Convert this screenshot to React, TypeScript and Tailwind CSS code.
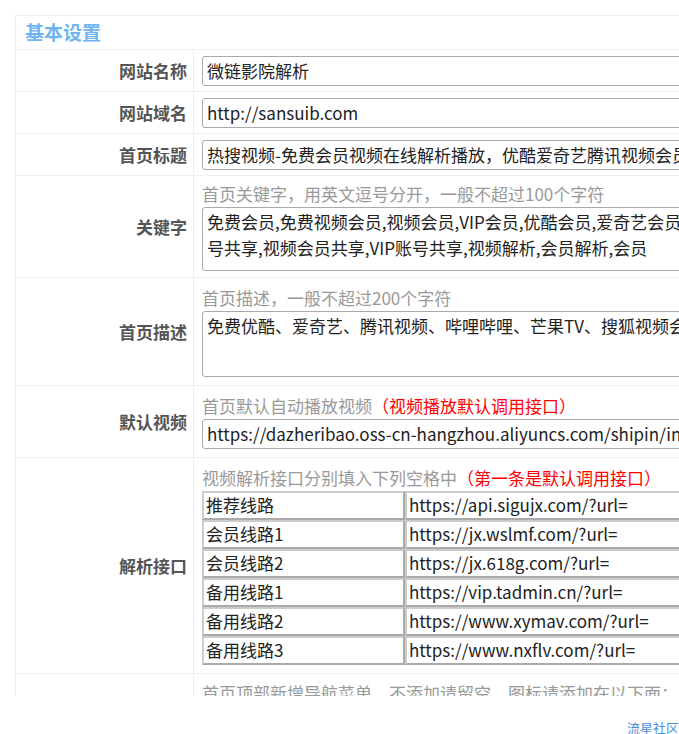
const font = { fontFamily: '"Microsoft YaHei","Noto Sans CJK SC",sans-serif' };

const Row = ({ label, children, h, top }: { label: string; children: React.ReactNode; h: string; top?: boolean }) => (
  <div className={`flex border-t border-[#eeeeee] ${h}`}>
    <div className="w-[178px] shrink-0 flex items-center justify-end pr-[6px] font-bold text-[17px] text-[#555] border-r border-[#eeeeee]">
      {label}
    </div>
    <div className={`flex-1 flex flex-col pl-[8px] gap-[2px] ${top ? "justify-start pt-[8px]" : "justify-center"}`}>{children}</div>
  </div>
);

const Input = ({ value }: { value: string }) => (
  <div className="h-[30px] w-[600px] border border-[#aaa] rounded-[3px] px-[4px] flex items-center text-[17px] text-[#222] whitespace-nowrap overflow-hidden">
    {value}
  </div>
);

const Hint = ({ children }: { children: React.ReactNode }) => (
  <div className="text-[17px] text-[#999] whitespace-nowrap leading-[22px]">{children}</div>
);

const lines = [
  ["推荐线路", "https://api.sigujx.com/?url="],
  ["会员线路1", "https://jx.wslmf.com/?url="],
  ["会员线路2", "https://jx.618g.com/?url="],
  ["备用线路1", "https://vip.tadmin.cn/?url="],
  ["备用线路2", "https://www.xymav.com/?url="],
  ["备用线路3", "https://www.nxflv.com/?url="],
];

export default function App() {
  return (
    <div className="w-[679px] h-[734px] overflow-hidden bg-white relative" style={font}>
      <div className="pt-[15px] pl-[15px] h-[696px] overflow-hidden">
        <div className="w-[700px] border-l border-t border-[#eeeeee]">
          <div className="h-[33px] flex items-center pl-[9px] text-[19px] font-bold text-[#6fb3f0]">基本设置</div>
          <Row label="网站名称" h="h-[42px]"><Input value="微链影院解析" /></Row>
          <Row label="网站域名" h="h-[42px]"><Input value="http://sansuib.com" /></Row>
          <Row label="首页标题" h="h-[42px]"><Input value="热搜视频-免费会员视频在线解析播放，优酷爱奇艺腾讯视频会员" /></Row>
          <Row label="关键字" h="h-[102px]">
            <Hint>首页关键字，用英文逗号分开，一般不超过100个字符</Hint>
            <div className="h-[64px] w-[600px] border border-[#aaa] rounded-[3px] px-[4px] py-[1px] text-[17px] leading-[26px] text-[#222] overflow-hidden whitespace-nowrap">
              免费会员,免费视频会员,视频会员,VIP会员,优酷会员,爱奇艺会员,账
              <br />
              号共享,视频会员共享,VIP账号共享,视频解析,会员解析,会员
            </div>
          </Row>
          <Row label="首页描述" h="h-[108px]">
            <Hint>首页描述，一般不超过200个字符</Hint>
            <div className="h-[66px] w-[600px] border border-[#aaa] rounded-[3px] px-[4px] py-[1px] text-[17px] leading-[26px] text-[#222] overflow-hidden whitespace-nowrap">
              免费优酷、爱奇艺、腾讯视频、哔哩哔哩、芒果TV、搜狐视频会员
            </div>
          </Row>
          <Row label="默认视频" h="h-[72px]">
            <Hint>首页默认自动播放视频<span className="text-[#f00]">（视频播放默认调用接口）</span></Hint>
            <Input value="https://dazheribao.oss-cn-hangzhou.aliyuncs.com/shipin/index.mp4" />
          </Row>
          <Row label="解析接口" h="h-[216px]">
            <Hint>视频解析接口分别填入下列空格中<span className="text-[#f00]">（第一条是默认调用接口）</span></Hint>
            <div className="flex flex-col">
              {lines.map(([a, b]) => (
                <div key={a} className="flex h-[29px]">
                  <div className="w-[203px] border-2 border-[#aaa] border-t-[#ccc] border-l-[#ccc] px-[2px] flex items-center text-[17px] text-[#222]">{a}</div>
                  <div className="w-[400px] border-2 border-[#aaa] border-t-[#ccc] border-l-[#ccc] px-[2px] flex items-center text-[17px] text-[#222]">{b}</div>
                </div>
              ))}
            </div>
          </Row>
          <Row label="" h="h-[60px]" top>
            <Hint>首页顶部新增导航菜单，不添加请留空，图标请添加在以下面：</Hint>
          </Row>
        </div>
      </div>
      <div className="absolute right-[0px] top-[718px] text-[13px] text-[#4a90d9]">流星社区</div>
    </div>
  );
}
